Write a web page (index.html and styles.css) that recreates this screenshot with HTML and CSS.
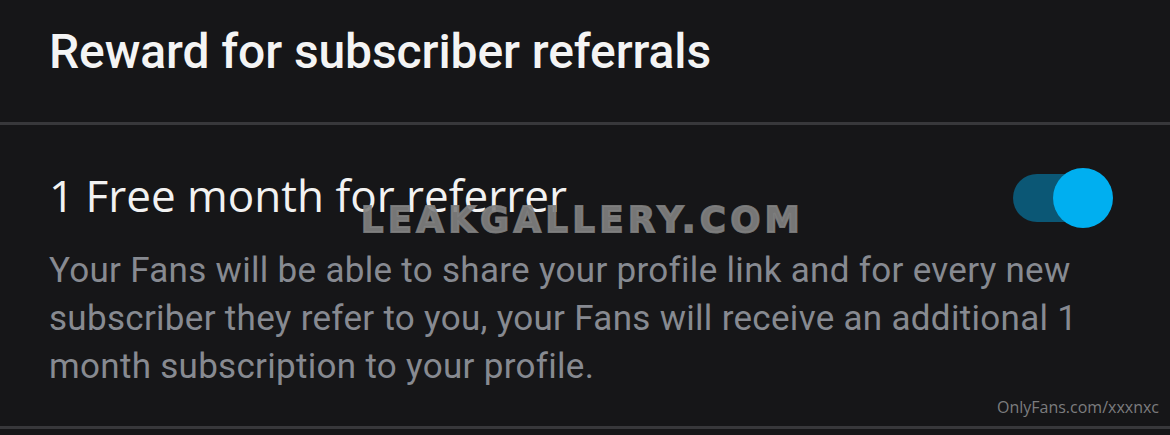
FILE: index.html
```html
<!DOCTYPE html>
<html lang="en">
<head>
<meta charset="utf-8">
<title>Reward for subscriber referrals</title>
<link rel="stylesheet" href="styles.css">
</head>
<body>
<div class="screen">
  <header class="section-head">
    <h1 class="head-title">Reward for subscriber referrals</h1>
  </header>
  <section class="option">
    <div class="option-row">
      <h2 class="option-title">1 Free month for referrer</h2>
      <div class="toggle" role="switch" aria-checked="true">
        <span class="toggle-track"></span>
        <span class="toggle-knob"></span>
      </div>
    </div>
    <p class="option-desc">Your Fans will be able to share your profile link and for every new subscriber they refer to you, your Fans will receive an additional 1 month subscription to your profile.</p>
  </section>
  <div class="watermark">LEAKGALLERY.COM</div>
  <div class="credit">OnlyFans.com/xxxnxc</div>
</div>
</body>
</html>
```

FILE: styles.css
```css
html, body {
  margin: 0;
  padding: 0;
  background: #161618;
}
.screen {
  position: relative;
  width: 1170px;
  height: 435px;
  overflow: hidden;
  background: #161618;
  font-family: Roboto, "Noto Sans", sans-serif;
}
.section-head {
  padding: 23px 0 0 49px;
  height: 99px;
  border-bottom: 3px solid #38383b;
}
.head-title {
  margin: 0;
  font-family: Roboto, sans-serif;
  font-weight: 500;
  font-size: 48px;
  color: #f4f4f4;
  letter-spacing: -0.1px;
}
.option {
  height: 304px;
  box-sizing: border-box;
  padding: 35px 57px 0 49px;
  border-bottom: 3px solid #38383b;
}
.option-row {
  display: flex;
  align-items: center;
  justify-content: space-between;
  height: 70px;
}
.option-title {
  margin: 0;
  font-family: "Open Sans", sans-serif;
  font-weight: 400;
  font-size: 44px;
  color: #f2f2f2;
}
.toggle {
  position: relative;
  width: 100px;
  height: 60px;
  margin-top: 6px;
}
.toggle-track {
  position: absolute;
  left: 0;
  top: 6px;
  width: 92px;
  height: 48px;
  border-radius: 24px;
  background: #0b5775;
}
.toggle-knob {
  position: absolute;
  right: 0;
  top: 0;
  width: 60px;
  height: 60px;
  border-radius: 50%;
  background: #00aff0;
}
.option-desc {
  margin: 17px 0 0;
  font-family: Roboto, sans-serif;
  font-size: 35px;
  letter-spacing: 0.3px;
  line-height: 48px;
  color: #878a91;
}
.watermark {
  position: absolute;
  left: 361px;
  top: 200px;
  font-family: "DejaVu Sans", sans-serif;
  font-weight: 700;
  font-size: 35px;
  letter-spacing: 4.7px;
  -webkit-text-stroke: 2px rgba(128, 128, 128, 0.92);
  color: rgba(128, 128, 128, 0.92);
}
.credit {
  position: absolute;
  right: 11px;
  top: 396px;
  font-family: "Open Sans", sans-serif;
  font-size: 16px;
  color: #7c7c7e;
}
```
